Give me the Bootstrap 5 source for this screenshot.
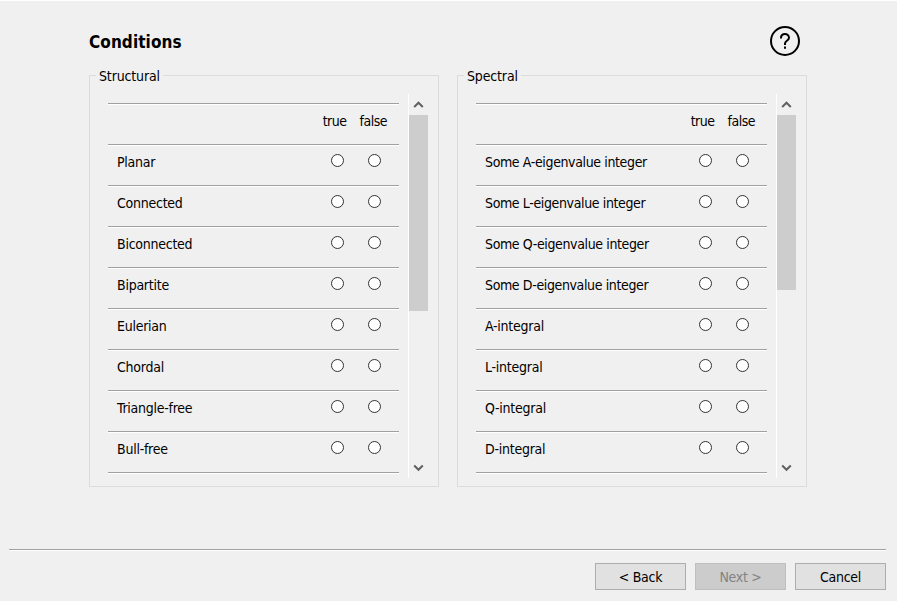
<!DOCTYPE html>
<html lang="en">
<head>
<meta charset="utf-8">
<meta name="viewport" content="width=device-width, initial-scale=1">
<title>Conditions</title>
<link href="https://cdn.jsdelivr.net/npm/bootstrap@5.3.0/dist/css/bootstrap.min.css" rel="stylesheet">
<style>
body{background:#f0f0f0;color:#000;font:14px/20px "DejaVu Sans Condensed","DejaVu Sans",sans-serif;font-stretch:condensed;letter-spacing:-.15px}
.wizard{height:601px;border-top:1px solid #fff}
.wizard-main{padding:25px 90px 0 89px}
.wizard-title{font-size:17px;line-height:30px;font-weight:700;letter-spacing:.08px;margin-top:1px}
.help-icon{margin-right:7px}
.groups{gap:18px;margin-top:18px}
.group{width:350px;height:412px;border:1px solid #dcdcdc}
.group-label{width:max-content;line-height:18px;margin:-9px 0 0 6px;padding:0 3px;background:#f0f0f0}
.pane{height:384px;margin-top:9px}
.cond-list{width:291px;margin:9px 9px 0 18px;letter-spacing:-.25px}
.cond{height:41px;border-top:1px solid #a0a0a0;box-shadow:inset 0 1px #fff;padding:7px 0 0 9px}
.eigen{letter-spacing:-.37px}
.list-end{height:2px;background:#fff;border-top:1px solid #a0a0a0}
.form-check-input.dot{width:13px;height:13px;margin:2px 0 0;border:1px solid #333;background-color:#fff;flex:none}
.dot+.dot{margin-left:24px}
.dots{padding-right:18px}
.heads{padding-right:12px;gap:13px;letter-spacing:-.5px}
.scroller{width:20px;height:384px;border-left:1px solid #fff}
.arrow{height:21px;display:block;width:19px}
.thumb{background:#cdcdcd;height:196px}
.thumb-short{height:175px}
.rule{height:2px;background:#fff;border-top:1px solid #a0a0a0;margin:62px 11px 0 9px}
.wizard-foot{padding:12px 11px 0;gap:9px}
.btn.wbtn{width:91px;height:27px;padding:1px 0 0;border:1px solid #adadad;border-radius:0;background:#e1e1e1;color:#000;font-size:14px;line-height:22px;letter-spacing:-.3px}
.btn.wbtn:disabled{background:#ccc;border-color:#bfbfbf;color:#838383;opacity:1}
</style>
</head>
<body>
<div class="wizard overflow-hidden">
  <main class="wizard-main">
    <header class="d-flex justify-content-between">
      <h1 class="wizard-title mb-0">Conditions</h1>
      <svg width="30" height="30" viewBox="0 0 30 30" fill="none" stroke="#000" stroke-width="2" class="help-icon" role="img" aria-label="Help"><circle cx="15" cy="15" r="14"/><path d="M11 12.6V11.6a4 4 0 0 1 4-3.7 4 4 0 0 1 4 3.8c0 3-4 3-4 5.8v1.5"/><path d="M15 20.6v2.2"/></svg>
    </header>
    <div class="groups d-flex">
      <section class="group">
        <div class="group-label">Structural</div>
        <div class="pane d-flex">
          <div class="cond-list">
            <div class="cond d-flex justify-content-end"><div class="d-flex heads"><span>true</span><span>false</span></div></div>
            <div class="cond d-flex justify-content-between"><span>Planar</span><div class="d-flex dots"><input class="form-check-input dot" type="radio" name="s1"><input class="form-check-input dot" type="radio" name="s1"></div></div>
            <div class="cond d-flex justify-content-between"><span>Connected</span><div class="d-flex dots"><input class="form-check-input dot" type="radio" name="s2"><input class="form-check-input dot" type="radio" name="s2"></div></div>
            <div class="cond d-flex justify-content-between"><span>Biconnected</span><div class="d-flex dots"><input class="form-check-input dot" type="radio" name="s3"><input class="form-check-input dot" type="radio" name="s3"></div></div>
            <div class="cond d-flex justify-content-between"><span>Bipartite</span><div class="d-flex dots"><input class="form-check-input dot" type="radio" name="s4"><input class="form-check-input dot" type="radio" name="s4"></div></div>
            <div class="cond d-flex justify-content-between"><span>Eulerian</span><div class="d-flex dots"><input class="form-check-input dot" type="radio" name="s5"><input class="form-check-input dot" type="radio" name="s5"></div></div>
            <div class="cond d-flex justify-content-between"><span>Chordal</span><div class="d-flex dots"><input class="form-check-input dot" type="radio" name="s6"><input class="form-check-input dot" type="radio" name="s6"></div></div>
            <div class="cond d-flex justify-content-between"><span>Triangle-free</span><div class="d-flex dots"><input class="form-check-input dot" type="radio" name="s7"><input class="form-check-input dot" type="radio" name="s7"></div></div>
            <div class="cond d-flex justify-content-between"><span>Bull-free</span><div class="d-flex dots"><input class="form-check-input dot" type="radio" name="s8"><input class="form-check-input dot" type="radio" name="s8"></div></div>
            <div class="list-end"></div>
          </div>
          <div class="scroller d-flex flex-column">
            <svg class="arrow" viewBox="0 0 19 21" fill="none" stroke="#606060" stroke-width="2"><path d="M5.2 13 9.5 8.7 13.8 13"/></svg>
            <div class="thumb"></div>
            <svg class="arrow mt-auto" viewBox="0 0 19 21" fill="none" stroke="#606060" stroke-width="2"><path d="M5.2 8.5 9.5 12.8 13.8 8.5"/></svg>
          </div>
        </div>
      </section>
      <section class="group">
        <div class="group-label">Spectral</div>
        <div class="pane d-flex">
          <div class="cond-list">
            <div class="cond d-flex justify-content-end"><div class="d-flex heads"><span>true</span><span>false</span></div></div>
            <div class="cond d-flex justify-content-between"><span class="eigen">Some A-eigenvalue integer</span><div class="d-flex dots"><input class="form-check-input dot" type="radio" name="p1"><input class="form-check-input dot" type="radio" name="p1"></div></div>
            <div class="cond d-flex justify-content-between"><span class="eigen">Some L-eigenvalue integer</span><div class="d-flex dots"><input class="form-check-input dot" type="radio" name="p2"><input class="form-check-input dot" type="radio" name="p2"></div></div>
            <div class="cond d-flex justify-content-between"><span class="eigen">Some Q-eigenvalue integer</span><div class="d-flex dots"><input class="form-check-input dot" type="radio" name="p3"><input class="form-check-input dot" type="radio" name="p3"></div></div>
            <div class="cond d-flex justify-content-between"><span class="eigen">Some D-eigenvalue integer</span><div class="d-flex dots"><input class="form-check-input dot" type="radio" name="p4"><input class="form-check-input dot" type="radio" name="p4"></div></div>
            <div class="cond d-flex justify-content-between"><span>A-integral</span><div class="d-flex dots"><input class="form-check-input dot" type="radio" name="p5"><input class="form-check-input dot" type="radio" name="p5"></div></div>
            <div class="cond d-flex justify-content-between"><span>L-integral</span><div class="d-flex dots"><input class="form-check-input dot" type="radio" name="p6"><input class="form-check-input dot" type="radio" name="p6"></div></div>
            <div class="cond d-flex justify-content-between"><span>Q-integral</span><div class="d-flex dots"><input class="form-check-input dot" type="radio" name="p7"><input class="form-check-input dot" type="radio" name="p7"></div></div>
            <div class="cond d-flex justify-content-between"><span>D-integral</span><div class="d-flex dots"><input class="form-check-input dot" type="radio" name="p8"><input class="form-check-input dot" type="radio" name="p8"></div></div>
            <div class="list-end"></div>
          </div>
          <div class="scroller d-flex flex-column">
            <svg class="arrow" viewBox="0 0 19 21" fill="none" stroke="#606060" stroke-width="2"><path d="M5.2 13 9.5 8.7 13.8 13"/></svg>
            <div class="thumb thumb-short"></div>
            <svg class="arrow mt-auto" viewBox="0 0 19 21" fill="none" stroke="#606060" stroke-width="2"><path d="M5.2 8.5 9.5 12.8 13.8 8.5"/></svg>
          </div>
        </div>
      </section>
    </div>
  </main>
  <div class="rule"></div>
  <footer class="wizard-foot d-flex justify-content-end">
    <button class="btn wbtn" type="button">&lt; Back</button>
    <button class="btn wbtn" type="button" disabled>Next &gt;</button>
    <button class="btn wbtn" type="button">Cancel</button>
  </footer>
</div>
<script src="https://cdn.jsdelivr.net/npm/bootstrap@5.3.0/dist/js/bootstrap.bundle.min.js"></script>
</body>
</html>
